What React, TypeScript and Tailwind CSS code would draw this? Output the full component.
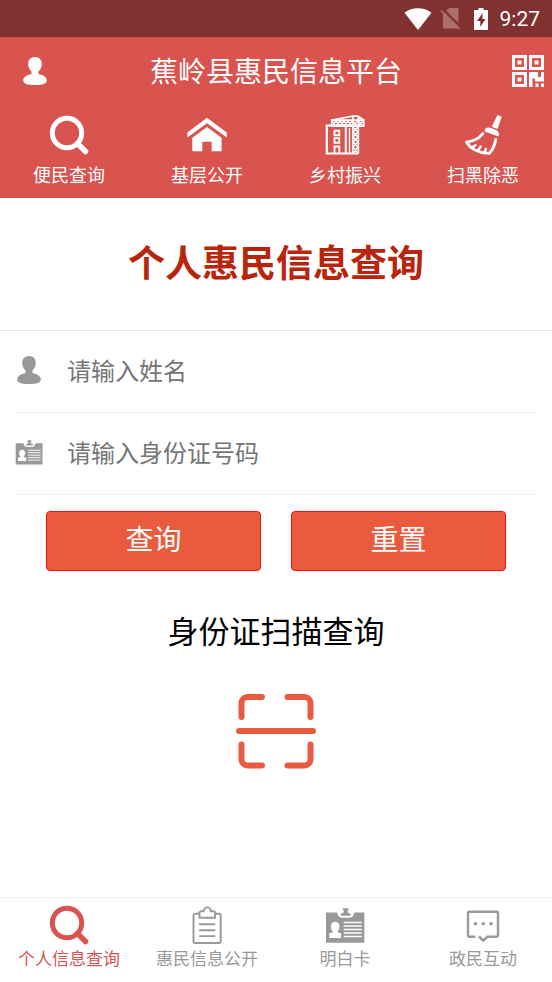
import React, { useState } from "react";

type IconProps = { className?: string };

const PersonIcon = ({ className }: IconProps) => (
  <svg viewBox="0 0 24 28" fill="currentColor" className={className} aria-hidden="true">
    <path d="M12 0C7.600 0 5.200 3 5.200 7c0 3 1.300 5.800 3.300 7.600v2.400C4 18 .2 20 .2 23.400.2 26.600 4 27.900 12 27.900s11.800-1.300 11.800-4.500c0-3.400-3.800-5.400-8.300-6.400v-2.400c2-1.800 3.300-4.600 3.300-7.600 0-4-2.400-7-6.800-7z" />
  </svg>
);

const QrIcon = ({ className }: IconProps) => (
  <svg viewBox="0 0 32 32" className={className} aria-hidden="true">
    <g fill="none" stroke="currentColor" strokeWidth="3">
      <rect x="1.500" y="1.500" width="12" height="12" />
      <rect x="18.500" y="1.500" width="12" height="12" />
      <rect x="1.500" y="18.500" width="12" height="12" />
    </g>
    <g fill="currentColor">
      <rect x="5.500" y="5.500" width="4" height="4" />
      <rect x="22.500" y="5.500" width="4" height="4" />
      <rect x="5.500" y="22.500" width="4" height="4" />
      <path d="M17 17h9v5h3v-5h3v9.500h-9v-3h-2.500V32H17zM23.500 28.500h3V32h-3zM29 28.500h3V32h-3z" />
    </g>
  </svg>
);

const SearchIcon = ({ className }: IconProps) => (
  <svg
    viewBox="0 0 40 40"
    fill="none"
    stroke="currentColor"
    strokeWidth="5"
    className={className}
    aria-hidden="true"
  >
    <circle cx="18" cy="18" r="14.700" />
    <path d="M28.500 28.500l8 8" strokeWidth="5.500" strokeLinecap="round" />
  </svg>
);

const HomeIcon = ({ className }: IconProps) => (
  <svg viewBox="0 0 40 40" fill="currentColor" className={className} aria-hidden="true">
    <path d="M20 2.700L39.700 17.500v5L20 8.300.4 22.500v-5z" />
    <path d="M20 12l14.600 10.800V36.200h-9.900V26.800h-9.400v9.400H5.300V22.800z" />
  </svg>
);

const CraneIcon = ({ className }: IconProps) => (
  <svg viewBox="0 0 40 40" fill="none" stroke="currentColor" className={className} aria-hidden="true">
    <path d="M6 10.500H1.800V38.500H33.500" strokeWidth="2.200" />
    <path d="M20.800 12v26" strokeWidth="2" />
    <path d="M24.500 13v25" strokeWidth="1.400" />
    <g strokeWidth="1.900">
      <rect x="9.500" y="15.700" width="4.800" height="4.600" />
      <rect x="9.500" y="23.200" width="4.800" height="4.600" />
      <path d="M9.500 38v-6.500h4.800v6.500" />
    </g>
    <g strokeWidth="1.700">
      <path d="M6.700 5.200h32v6h-32zM27.800 5.200V38.500M33.300 5.200V38.500" />
      <path d="M7 5L28 1.200h5l6 4M28 1.200v4M33.300 1.200v4" />
    </g>
    <path
      d="M7 11l4-5 4 5 4-5 4 5 4-5 6 5 5-5M7 6l4 5 4-5 4 5 4-5 4 5 6-5 5 5M28 12l5 5-5 5 5 5-5 5 5 6M33 12l-5 5 5 5-5 5 5 5-5 6"
      strokeWidth="1.500"
    />
  </svg>
);

const BroomIcon = ({ className }: IconProps) => (
  <svg
    viewBox="0 0 40 40"
    fill="none"
    stroke="currentColor"
    strokeLinejoin="round"
    strokeLinecap="round"
    className={className}
    aria-hidden="true"
  >
    <path d="M34.800.7l3.200 1-3.800 11.600-4.700-1.800z" fill="currentColor" strokeWidth="1.200" />
    <path
      d="M22.500 16c0-2.600 2.200-3.200 4.700-2.300l4.500 1.700c2.500 1 3.900 2.600 3.200 5z"
      fill="currentColor"
      strokeWidth="1.800"
    />
    <path
      d="M19.800 18.500C16 24 10.500 26.200 3.500 27.200c4 6.500 11.500 10.600 22.700 11.200 3.300-3.600 5.600-8.400 6.600-14"
      strokeWidth="2.900"
    />
    <path d="M8.500 32.800l4-2.600M14.500 36l3.200-4.500M21.500 38l1.200-4" strokeWidth="2.400" />
  </svg>
);

const ClipboardIcon = ({ className }: IconProps) => (
  <svg
    viewBox="0 0 40 40"
    fill="none"
    stroke="currentColor"
    strokeWidth="1.900"
    strokeLinejoin="round"
    className={className}
    aria-hidden="true"
  >
    <path d="M12.500 8.800H8.100a1.600 1.600 0 0 0-1.600 1.600v26a1.600 1.600 0 0 0 1.600 1.600h24a1.600 1.600 0 0 0 1.600-1.600v-26a1.600 1.600 0 0 0-1.600-1.600h-4.200" />
    <path d="M12.500 12.700V7.300l1.300-1h2.900c.3-2.500 1.400-3.900 3.600-3.900s3.300 1.400 3.600 3.900h2.900l1.300 1v5.400z" />
    <path d="M12.800 19.300h14.700M12.800 25.200h14.700M12.800 31.100h14.700" strokeLinecap="round" />
  </svg>
);

const IdCardIcon = ({ className }: IconProps) => (
  <svg viewBox="0 0 40 40" fill="currentColor" className={className} aria-hidden="true">
    <path d="M1 7.500h11c.8 3.400 2.400 5.300 5.300 5.300h6.800c2.900 0 4.500-1.900 5.300-5.300h9.900v30.200H1z" />
    <path d="M17.900 3.300h5.500v2.300h-1.100l.3 1.800 2.900 1.400v2H15.900v-2l2.900-1.400.3-1.800h-1.200z" />
    <path
      d="M4.300 33v-4.700c1.500-.4 3-.8 3.800-1.400-1.700-1.700-2.200-3.700-2.200-5.700 0-2.800 1.800-4.400 4.300-4.400s4.300 1.600 4.300 4.400c0 2-.5 4-2.200 5.700.8.600 2.300 1 3.800 1.400V33z"
      fill="#fff"
    />
    <path
      d="M18.700 17.500h18M18.700 21h18M18.700 24.500h18M18.700 28h18M18.700 31.500h18"
      stroke="#fff"
      strokeWidth="1.300"
    />
  </svg>
);

const ChatIcon = ({ className }: IconProps) => (
  <svg viewBox="0 0 40 40" fill="none" stroke="currentColor" className={className} aria-hidden="true">
    <path
      d="M12.200 31.800H6.500A1.500 1.500 0 0 1 5 30.300V8.200a1.500 1.500 0 0 1 1.500-1.500h27a1.500 1.500 0 0 1 1.500 1.500v22.100a1.500 1.500 0 0 1-1.500 1.500H24.500l-4.300 3.800-4.300-4.300"
      strokeWidth="2.400"
    />
    <g fill="currentColor" stroke="none">
      <circle cx="12.400" cy="18.800" r="1.800" />
      <circle cx="20.200" cy="18.800" r="1.800" />
      <circle cx="28" cy="18.800" r="1.800" />
    </g>
  </svg>
);

const ScanIcon = ({ className }: IconProps) => (
  <svg
    viewBox="0 0 80 78"
    fill="none"
    stroke="currentColor"
    strokeWidth="6"
    strokeLinecap="round"
    className={className}
    aria-hidden="true"
  >
    <path d="M5.500 25V11a6 6 0 0 1 6-6h14.500M51.500 5H68.500a6 6 0 0 1 6 6v14M5.500 52.500V67.500a6 6 0 0 0 6 6h14.500M51.500 73.500H68.500a6 6 0 0 0 6-6V52.500M3 39h74" />
  </svg>
);

const StatusBar = () => (
  <div className="flex h-[37px] items-center justify-end bg-[#803130] pr-3 text-white">
    <svg viewBox="0 0 28 22" className="h-[22px] w-7" fill="currentColor" aria-hidden="true">
      <path d="M14 22L.5 4.800C4.500 1.700 9 .3 14 .3s9.500 1.400 13.500 4.500z" />
    </svg>
    <svg viewBox="0 0 22 22" className="ml-2 h-[22px] w-[22px]" aria-hidden="true">
      <path d="M9 0h9.500v20.500H3V6z" fill="#ab6f6e" />
      <path d="M2.500 1l18.500 18.500" stroke="#803130" strokeWidth="2.500" />
      <path d="M1 2.500l18.500 18.500" stroke="#ab6f6e" strokeWidth="1.800" />
    </svg>
    <svg viewBox="0 0 14 22" className="ml-3 h-[22px] w-3.5" aria-hidden="true">
      <path d="M4.500 0h5v2H14v20H0V2h4.500z" fill="#fff" />
      <path d="M8.500 5L3 13h3.300v6L11.500 11H8.500z" fill="#803130" />
    </svg>
    <span className="ml-3 font-['Roboto',sans-serif] text-[21px] leading-6">9:27</span>
  </div>
);

const categories = [
  { label: "便民查询", Icon: SearchIcon },
  { label: "基层公开", Icon: HomeIcon },
  { label: "乡村振兴", Icon: CraneIcon },
  { label: "扫黑除恶", Icon: BroomIcon },
];

const tabs = [
  { label: "个人信息查询", Icon: SearchIcon },
  { label: "惠民信息公开", Icon: ClipboardIcon },
  { label: "明白卡", Icon: IdCardIcon },
  { label: "政民互动", Icon: ChatIcon },
];

const buttonClass =
  "h-[60px] flex-1 cursor-pointer rounded border border-[#f5100c] bg-[#e95b3c] pb-1.5 text-[28px] leading-8 text-white";

const rowClass = "flex h-[82px] items-center gap-6 border-b border-[#efefef] pb-1";

const inputClass =
  "min-w-0 flex-1 bg-transparent text-2xl text-black outline-none placeholder:text-[#757575]";

const App = () => {
  const [name, setName] = useState("");
  const [idNumber, setIdNumber] = useState("");
  const [selectedTab, setSelectedTab] = useState(0);

  const reset = () => {
    setName("");
    setIdNumber("");
  };

  return (
    <div className="flex min-h-screen flex-col bg-white font-['Noto_Sans_CJK_SC',sans-serif]">
      <StatusBar />

      <header className="bg-[#d9534f] text-white">
        <div className="flex h-[68px] items-center pl-[23px] pr-2">
          <div className="flex flex-1">
            <button type="button" aria-label="个人中心" className="mr-[15px] cursor-pointer">
              <PersonIcon className="h-7 w-6" />
            </button>
          </div>
          <h1 className="pb-0.5 pr-[15px] text-[28px] leading-10">蕉岭县惠民信息平台</h1>
          <div className="flex flex-1 justify-end">
            <button type="button" aria-label="扫一扫" className="cursor-pointer">
              <QrIcon className="h-8 w-8" />
            </button>
          </div>
        </div>
        <nav className="grid grid-cols-4">
          {categories.map(({ label, Icon }) => (
            <a
              key={label}
              href="#"
              className="flex flex-col items-center gap-[7px] pb-3 pt-2.5 text-lg leading-6"
            >
              <Icon className="h-10 w-10" />
              {label}
            </a>
          ))}
        </nav>
      </header>

      <main className="flex-1">
        <div className="border-b border-[#e6e6e6] pb-[42px] pt-9 text-center">
          <h2 className="text-[37px] font-bold leading-[54px] text-[#b9240b]">
            个人惠民信息查询
          </h2>
        </div>

        <form onSubmit={(e) => e.preventDefault()}>
          <div className="px-[15px]">
            <div className={rowClass}>
              <label htmlFor="name" aria-label="姓名" className="flex w-7 justify-center text-[#999]">
                <PersonIcon className="h-7 w-6" />
              </label>
              <input
                id="name"
                type="text"
                placeholder="请输入姓名"
                value={name}
                onChange={(e) => setName(e.target.value)}
                className={inputClass}
              />
            </div>
            <div className={rowClass}>
              <label htmlFor="idNumber" aria-label="身份证号码" className="w-7 text-[#999]">
                <IdCardIcon className="h-7 w-7" />
              </label>
              <input
                id="idNumber"
                type="text"
                placeholder="请输入身份证号码"
                value={idNumber}
                onChange={(e) => setIdNumber(e.target.value)}
                className={inputClass}
              />
            </div>
          </div>

          <div className="flex gap-[30px] px-[46px] pt-4">
            <button type="submit" className={buttonClass}>
              查询
            </button>
            <button type="button" onClick={reset} className={buttonClass}>
              重置
            </button>
          </div>
        </form>

        <div className="flex flex-col items-center gap-[42px] pb-10 pt-[39px]">
          <h3 className="text-[31px] leading-10 text-black">身份证扫描查询</h3>
          <button type="button" aria-label="扫描身份证" className="cursor-pointer text-[#e85b40]">
            <ScanIcon className="h-[78px] w-20" />
          </button>
        </div>
      </main>

      <nav className="grid grid-cols-4 border-t border-[#efefef]">
        {tabs.map(({ label, Icon }, index) => (
          <button
            key={label}
            type="button"
            onClick={() => setSelectedTab(index)}
            className={`flex cursor-pointer flex-col items-center gap-px pb-3 pt-[7px] text-[17px] leading-6 ${
              index === selectedTab ? "text-[#d9534f]" : "text-[#999]"
            }`}
          >
            <Icon className="h-10 w-10" />
            {label}
          </button>
        ))}
      </nav>
    </div>
  );
};

export default App;
